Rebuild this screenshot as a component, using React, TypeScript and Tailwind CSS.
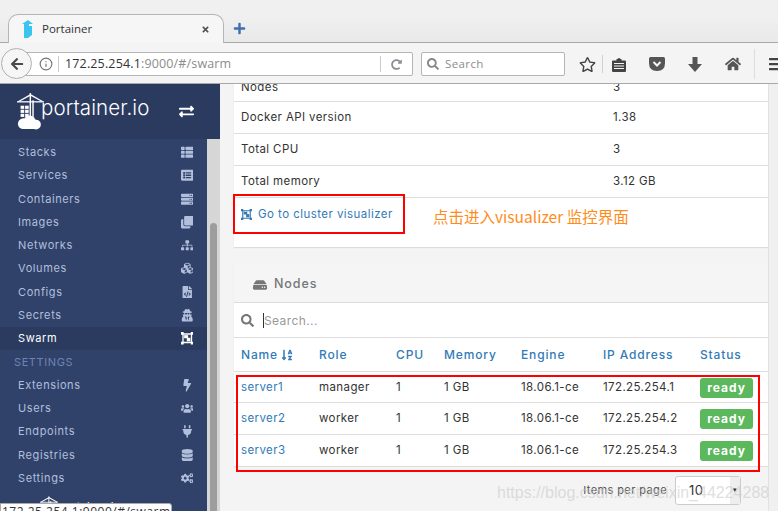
import React from 'react';
import {
  FaThList, FaListAlt, FaServer, FaClone, FaSitemap, FaCubes, FaFileCode, FaUserSecret,
  FaBolt, FaUsers, FaPlug, FaDatabase, FaCogs, FaExchangeAlt, FaSortAlphaDown, FaHdd, FaSearch,
  FaArrowLeft, FaHome, FaRegStar, FaBars, FaTimes, FaPlus, FaRedoAlt,
} from 'react-icons/fa';
import { FiInfo } from 'react-icons/fi';

const uiFont = "font-['Inter','Liberation_Sans',sans-serif]";

const SwarmIcon = ({ className }: { className?: string }) => (
  <svg viewBox="0 0 14 14" className={className} fill="currentColor" width="1em" height="1em">
    <path fillRule="evenodd" d="M0 0h3v1.5h8V0h3v3h-1.5v8H14v3h-3v-1.5H3V14H0v-3h1.5V3H0z M3 3v8h8V3z" />
    <rect x="3.5" y="3.5" width="4.5" height="3.5" />
    <rect x="6.5" y="6.5" width="4" height="4" />
  </svg>
);

const menu = [
  { label: 'Stacks', icon: FaThList, h: 'h-[23px]' },
  { label: 'Services', icon: FaListAlt, h: 'h-[23px]' },
  { label: 'Containers', icon: FaServer, h: 'h-[24px]' },
  { label: 'Images', icon: FaClone, h: 'h-[23px]' },
  { label: 'Networks', icon: FaSitemap, h: 'h-[23px]' },
  { label: 'Volumes', icon: FaCubes, h: 'h-[23px]' },
  { label: 'Configs', icon: FaFileCode, h: 'h-[24px]' },
  { label: 'Secrets', icon: FaUserSecret, h: 'h-[23px]' },
];
const settings = [
  { label: 'Extensions', icon: FaBolt, h: 'h-[23px]' },
  { label: 'Users', icon: FaUsers, h: 'h-[23px]' },
  { label: 'Endpoints', icon: FaPlug, h: 'h-[23px]' },
  { label: 'Registries', icon: FaDatabase, h: 'h-[24px]' },
  { label: 'Settings', icon: FaCogs, h: 'h-[23px]' },
];
const nodes = [
  { name: 'server1', role: 'manager', ip: '172.25.254.1', h: 'h-[31px]' },
  { name: 'server2', role: 'worker', ip: '172.25.254.2', h: 'h-[32px]' },
  { name: 'server3', role: 'worker', ip: '172.25.254.3', h: 'h-[32px]' },
];
const cols = 'grid grid-cols-[78px_77px_48px_77px_82px_97px_1fr] pl-[7px]';

const Crane = ({ className }: { className: string }) => (
  <svg viewBox="0 0 30 42" className={className} fill="white">
    <path d="M1 9 L15 1 L29 9 L28 10 L15 3 L2 10 Z" />
    <rect x="14" y="0" width="1.6" height="32" />
    <rect x="17" y="8" width="1.6" height="24" />
    <rect x="0" y="9" width="30" height="1.4" />
    <rect x="4" y="14" width="4" height="3.5" /><rect x="9" y="14" width="4" height="3.5" />
    <rect x="4" y="18.5" width="4" height="3.5" /><rect x="9" y="18.5" width="4" height="3.5" />
    <rect x="4" y="23" width="4" height="3.5" /><rect x="9" y="23" width="4" height="3.5" />
    <circle cx="7" cy="34" r="6" /><circle cx="14" cy="32" r="7" /><circle cx="21" cy="35" r="5.5" />
    <rect x="6" y="34" width="16" height="6" rx="3" />
  </svg>
);

const NavRow = ({ label, Icon, h, active }: { label: string; Icon: React.ComponentType<{ className?: string }>; h: string; active?: boolean }) => (
  <div className={`${h} flex items-center justify-between pl-[18px] pr-[13px] text-[11px] tracking-[0.6px] ${active ? 'bg-[#2a3b5f] text-white' : 'text-[#b1bfdc]'}`}>
    <span>{label}</span>
    <span className="w-[14px] flex justify-center"><Icon className="text-[12.5px]" /></span>
  </div>
);

const BrowserChrome = () => (
  <div className="shrink-0 font-['Open_Sans','Noto_Sans',sans-serif] text-[#333]">
    <div className="h-[15px] overflow-hidden bg-[#f0f0f0] text-center pl-[14px]">
      <div className="-mt-[14px] text-[12px] font-semibold text-[#55606b]">Portainer - Mozilla Firefox</div>
    </div>
    <div className="h-[28px] flex items-end bg-gradient-to-b from-[#f0f0f0] to-[#e9e9e9] border-b border-[#a9a9a9] relative">
      <div className="ml-[8px] h-[29px] w-[216px] -mb-px flex items-center pl-[13px] pr-[13px] rounded-t-[10px] border border-b-0 border-[#b5b5b5] bg-[#f6f6f6]">
        <svg viewBox="0 0 12 18" className="w-[12px] h-[18px]"><path d="M6 0 L11 4 H7 V6 H10 V15 L6 18 H2 V4 H0 Z" fill="#3bc4ef" /></svg>
        <span className="ml-[8px] text-[11.5px] flex-1">Portainer</span>
        <FaTimes className="text-[9px] text-[#555]" />
      </div>
      <FaPlus className="ml-[9px] mb-[7px] text-[13px] text-[#3f6fb0]" />
    </div>
    <div className="h-[41px] pt-[2px] bg-[#f4f4f4] border-b border-[#a9a9a9] flex items-center relative">
      <div className="ml-[20px] w-[393px] shrink-0 h-[24px] bg-white border border-[#b5b5b5] rounded-r-[2px] flex items-center pl-[18px] text-[12.5px] tracking-[0.15px]">
        <FiInfo className="text-[14px] text-[#777]" />
        <span className="ml-[5px] w-px h-[16px] bg-[#ccc]" />
        <span className="ml-[6px] flex-1 whitespace-nowrap">172.25.254.1<span className="text-[#8c8c8c]">:9000/#/swarm</span></span>
        <span className="w-px h-[16px] bg-[#ccc]" />
        <FaRedoAlt className="mx-[10px] text-[11px] text-[#8a8f96]" />
      </div>
      {/* back button sits over the url bar */}
      <div className="absolute left-[1px] top-[5px] w-[31px] h-[31px] rounded-full bg-[#f6f6f6] border border-[#b0b0b0] flex items-center justify-center">
        <FaArrowLeft className="text-[14px] text-[#4a4a4a]" />
      </div>
      <div className="ml-[8px] w-[144px] shrink-0 h-[24px] bg-white border border-[#b5b5b5] rounded-[2px] flex items-center pl-[5px] text-[11.5px] text-[#8c8c8c] tracking-[0.4px]">
        <FaSearch className="text-[12px] text-[#888] mr-[6px]" />Search
      </div>
      <FaRegStar className="ml-[14px] text-[17px] text-[#444] shrink-0" />
      <span className="ml-[6px] w-px h-[18px] bg-[#d0d0d0] shrink-0" />
      <svg viewBox="0 0 14 15" className="ml-[9px] w-[14px] h-[15px] shrink-0">
        <path d="M4.5 2 H5.5 Q7 0 8.5 2 H9.5 V3.5 H13 Q14 3.5 14 4.5 V14 Q14 15 13 15 H1 Q0 15 0 14 V4.5 Q0 3.5 1 3.5 H4.5 Z" fill="#444" />
        <path d="M2 6.5 H12 M2 9 H12 M2 11.5 H12" stroke="#f4f4f4" strokeWidth="1" />
      </svg>
      <svg viewBox="0 0 16 14" className="ml-[23px] w-[16px] h-[14px] shrink-0"><path d="M1.5 0 H14.5 Q16 0 16 1.5 V6 Q16 14 8 14 Q0 14 0 6 V1.5 Q0 0 1.5 0 Z" fill="#555" /><path d="M4.5 5 L8 8.5 L11.5 5" fill="none" stroke="#f4f4f4" strokeWidth="2" /></svg>
      <svg viewBox="0 0 14 15" className="ml-[23px] w-[14px] h-[15px] shrink-0"><path d="M4.5 0 H9.5 V7 H14 L7 15 L0 7 H4.5 Z" fill="#555" /></svg>
      <FaHome className="ml-[23px] text-[16px] text-[#555] shrink-0" />
      <span className="ml-[13px] w-px h-[30px] bg-[#ddd] shrink-0" />
      <FaBars className="ml-[13px] text-[16px] text-[#444] shrink-0" />
    </div>
  </div>
);

const Sidebar = () => (
  <aside className="w-[220px] shrink-0 bg-[#30426a] flex flex-col overflow-hidden">
    <div className="h-[55px] shrink-0 bg-[#2a3b5f] flex items-center pl-[17px] pr-[26px] text-white">
      <Crane className="w-[27px] h-[40px]" />
      <span className="-ml-[3px] pb-[7px] text-[20.5px] font-light tracking-[0.1px] flex-1">portainer.io</span>
      <FaExchangeAlt className="text-[15px]" />
    </div>
    <div className="flex flex-1 min-h-0">
      <div className="w-[207px] pt-[2px]">
        {menu.map((m) => <NavRow key={m.label} label={m.label} Icon={m.icon} h={m.h} />)}
        <NavRow label="Swarm" Icon={SwarmIcon} h="h-[23px]" active />
        <div className="h-[24px] flex items-center pl-[14px] text-[11px] tracking-[0.6px] text-[#6f83b3]">SETTINGS</div>
        {settings.map((m) => <NavRow key={m.label} label={m.label} Icon={m.icon} h={m.h} />)}
        <div className="flex items-start pl-[40px] pt-[6px] text-white">
          <Crane className="w-[18px] h-[26px]" />
          <span className="pt-[2px] text-[12px] font-light">portainer.io</span>
        </div>
      </div>
      <div className="w-[13px] bg-[#d6d6d6] pt-[84px] pl-[3px] pr-[3px]">
        <div className="h-[300px] bg-[#9d9d9d] rounded-t-full" />
      </div>
    </div>
  </aside>
);

const InfoRow = ({ k, v }: { k: string; v: string }) => (
  <div className="h-[32px] pt-[1px] flex items-center border-b border-[#ddd] px-[7px] text-[#333]">
    <span className="w-[372px]">{k}</span><span>{v}</span>
  </div>
);

const Main = () => (
  <main className={`flex-1 min-w-0 bg-[#f4f4f4] overflow-hidden text-[11.5px] tracking-[0.4px] relative ${uiFont}`}>
    <div className="w-[535px] ml-[14px] bg-white shadow-[0_1px_1px_rgba(0,0,0,0.1)]">
      <div className="h-[18px] overflow-hidden flex items-end border-b border-[#ddd] px-[7px] text-[#333]">
        <span className="w-[372px] mb-[5px]">Nodes</span><span className="mb-[5px]">3</span>
      </div>
      <InfoRow k="Docker API version" v="1.38" />
      <InfoRow k="Total CPU" v="3" />
      <InfoRow k="Total memory" v="3.12 GB" />
      <div className="h-[49px] pt-[8px] pl-[7px] flex items-start text-[#337ab7] text-[11.5px] tracking-[0.45px]">
        <SwarmIcon className="text-[11px] mt-[3px] mr-[6px]" />Go to cluster visualizer
      </div>
    </div>

    <div className="w-[535px] ml-[14px] mt-[16px] bg-white shadow-[0_1px_1px_rgba(0,0,0,0.1)]">
      <div className="h-[40px] pt-[4px] bg-[#f5f5f5] border-b border-[#ddd] flex items-center pl-[19px] text-[#767676] text-[12.5px] font-medium tracking-[0.9px]">
        <FaHdd className="text-[14px] mr-[7px]" />Nodes
      </div>
      <div className="h-[35px] pt-[1px] border-b border-[#ddd] flex items-center pl-[7px] text-[12px]">
        <FaSearch className="text-[13px] text-[#767676] mr-[9px]" />
        <span className="w-px h-[15px] bg-[#333]" />
        <span className="text-[#999]">Search...</span>
      </div>
      <div className={`${cols} h-[34px] text-[12px] items-center border-b border-[#ddd] text-[#337ab7] font-medium tracking-[0.85px]`}>
        <span className="flex items-center">Name<FaSortAlphaDown className="ml-[3px] text-[12px]" /></span>
        <span>Role</span><span>CPU</span><span>Memory</span><span>Engine</span><span>IP Address</span><span>Status</span>
      </div>
      {nodes.map((n) => (
        <div key={n.name} className={`${cols} ${n.h} pt-[1px] items-center border-b border-[#ddd] text-[#333]`}>
          <span className="text-[#337ab7]">{n.name}</span>
          <span>{n.role}</span><span>1</span><span>1 GB</span><span>18.06.1-ce</span><span>{n.ip}</span>
          <span className="w-[53px] h-[20px] rounded-[3px] bg-[#5cb85c] text-white font-bold text-[12px] tracking-[1px] flex items-center justify-center">ready</span>
        </div>
      ))}
    </div>
    <div className="w-[535px] ml-[14px] bg-[#f4f4f4] flex justify-end items-center pt-[9px] pr-[28px] text-[11px] text-[#555]">
      <span>Items per page</span>
      <div className="ml-[8px] w-[66px] h-[29px] bg-white border border-[#ccc] rounded-[3px] flex items-center pl-[13px] text-[13px] text-[#333] relative">
        10
        <span className="absolute right-0 top-0 bottom-0 w-[10px] bg-[#eee] flex items-center justify-center text-[7px]">▾</span>
      </div>
    </div>
  </main>
);

export default function App() {
  return (
    <div className="w-[778px] h-[511px] overflow-hidden flex flex-col relative bg-white">
      <BrowserChrome />
      <div className={`flex flex-1 min-h-0 ${uiFont}`}>
        <Sidebar />
        <Main />
        <div className="w-[10px] shrink-0 bg-[#f0f0f0] border-l border-[#e2e2e2]" />
      </div>

      {/* annotations drawn over the screenshot */}
      <div className="absolute left-[233px] top-[194px] w-[172px] h-[40px] border-2 border-[#f00]" />
      <div className="absolute left-[433px] top-[205px] text-[15.5px] text-[#ff8c1a] font-['Noto_Sans_CJK_SC','Noto_Sans',sans-serif]">点击进入visualizer 监控界面</div>
      <div className="absolute left-[236px] top-[375px] w-[524px] h-[97px] border-2 border-[#f00]" />
      <div className="absolute left-[497px] top-[481px] text-[16px] text-[#c9c9c9]/60 font-['Liberation_Sans',sans-serif] whitespace-nowrap">https://blog.csdn.net/weixin_44224288</div>
      <div className="absolute left-0 top-[503px] w-[172px] h-[14px] bg-white border border-[#aaa] rounded-tr-[3px] text-[12px] leading-[12px] pt-[2px] pl-[1px] tracking-[0.5px] text-[#333] font-['Open_Sans',sans-serif] whitespace-nowrap overflow-hidden">172.25.254.1:9000/#/swarm</div>
    </div>
  );
}
